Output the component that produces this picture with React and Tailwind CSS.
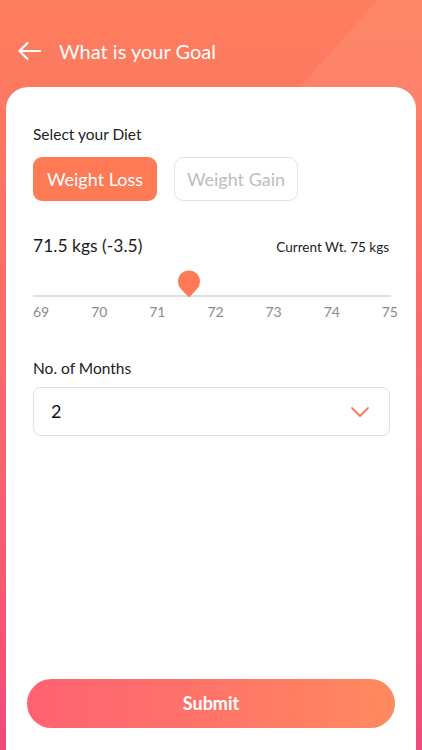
export default function App() {
  return (
    <div
      className="relative flex h-[750px] w-[422px] flex-col overflow-hidden bg-[linear-gradient(180deg,#fd7e5c_0%,#fb6f68_35%,#f45f72_70%,#ee4c7b_100%)]"
      style={{ fontFamily: "Lato, 'Open Sans', sans-serif" }}
    >
      <div className="pointer-events-none absolute inset-0 bg-white/[0.07] [clip-path:polygon(378px_0,422px_0,422px_120px,270px_120px)]" />

      <header className="relative flex h-[87px] items-center gap-[17px] pl-[17px] pt-[14px]">
        <svg width="25" height="20" viewBox="0 0 25 20" fill="none" stroke="white" strokeWidth="2.2" strokeLinecap="round" strokeLinejoin="round">
          <path d="M23 10H2.5M10.5 2L2.5 10l8 8" />
        </svg>
        <h1 className="text-[20px] leading-none text-white">What is your Goal</h1>
      </header>

      <main className="relative mx-[6px] flex flex-1 flex-col rounded-t-[22px] bg-white px-[21px]">
        <div className="px-[6px]">
          <p className="mt-[37px] text-[15.5px] leading-[20px] text-[#222]">Select your Diet</p>

          <div className="mt-[13px] flex gap-[17px]">
            <button className="h-[44px] w-[124px] rounded-[9px] bg-[#fd7a55] text-[18px] text-white">
              Weight Loss
            </button>
            <button className="h-[44px] w-[124px] rounded-[9px] border border-[#e2e2e2] text-[18px] text-[#bdbdbd]">
              Weight Gain
            </button>
          </div>

          <div className="mt-[32px] flex items-baseline justify-between">
            <span className="text-[17.5px] text-[#1c1c1c]">71.5 kgs (-3.5)</span>
            <span className="text-[13.5px] text-[#1c1c1c]">Current Wt. 75 kgs</span>
          </div>

          <div className="relative mt-[12px] w-[358px] pt-[24px]">
            <div className="h-[2px] bg-[#e0e0e0]" />
            <svg className="absolute left-[144px] top-[-1px]" width="24" height="28" viewBox="0 0 24 28">
              <path d="M12 27.5 L4 19 A11 11 0 1 1 20 19 Z" fill="#fd7a55" />
            </svg>
          </div>
          <div className="mt-[4px] flex w-[365px] justify-between text-[14px] text-[#8a8a8a]">
            <span>69</span>
            <span>70</span>
            <span>71</span>
            <span>72</span>
            <span>73</span>
            <span>74</span>
            <span>75</span>
          </div>

          <p className="mt-[36px] text-[15.5px] leading-[20px] text-[#222]">No. of Months</p>

          <div className="mt-[9px] flex h-[49px] w-[357px] items-center justify-between rounded-[8px] border border-[#e0e0e0] pl-[17px] pr-[19px]">
            <span className="text-[18px] text-[#111]">2</span>
            <svg width="20" height="12" viewBox="0 0 20 12" fill="none" stroke="#f47b5b" strokeWidth="1.8" strokeLinecap="round" strokeLinejoin="round">
              <path d="M2 2l8 8 8-8" />
            </svg>
          </div>
        </div>

        <div className="mt-auto mb-[22px] -ml-[0px]">
          <button className="h-[49px] w-[368px] rounded-full bg-[linear-gradient(90deg,#ff6272_0%,#ff7468_50%,#ff8a5e_100%)] text-[18px] font-bold text-white">
            Submit
          </button>
        </div>
      </main>
    </div>
  );
}
